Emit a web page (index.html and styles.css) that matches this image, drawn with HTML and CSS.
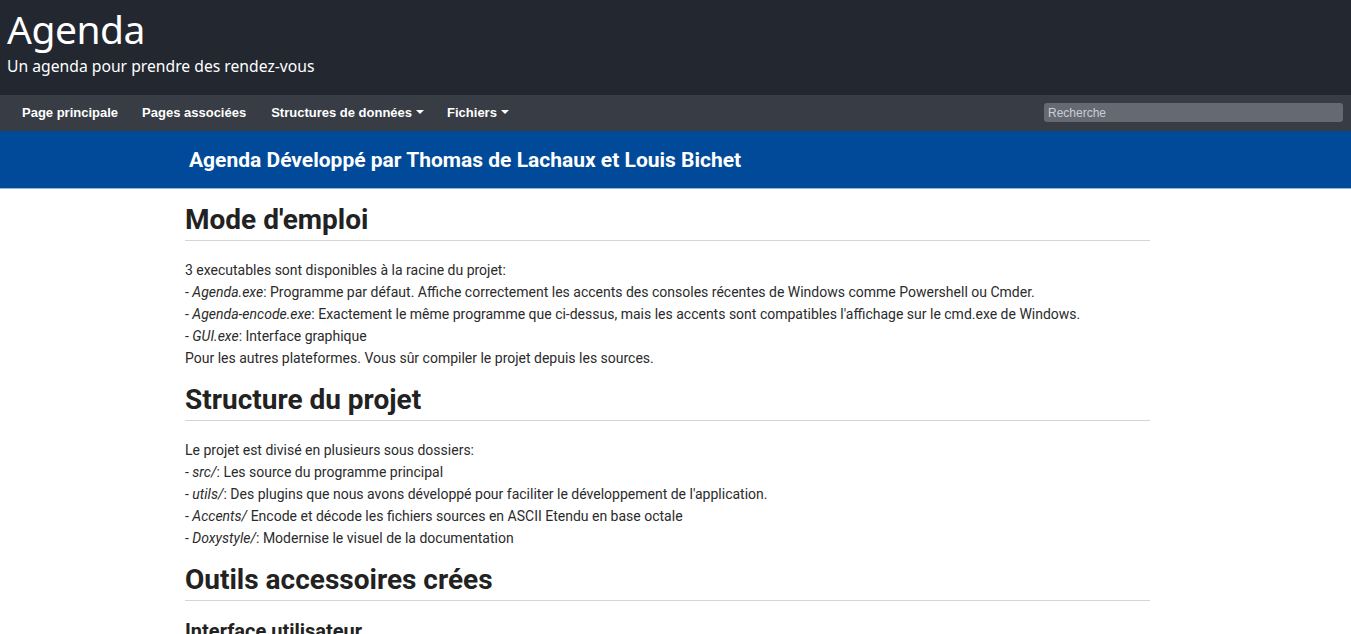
FILE: index.html
```html
<!DOCTYPE html>
<html lang="fr">
<head>
<meta charset="utf-8">
<title>Agenda</title>
<link rel="stylesheet" href="styles.css">
</head>
<body>
<header class="top">
  <div class="proj-name">Agenda</div>
  <div class="proj-brief">Un agenda pour prendre des rendez-vous</div>
</header>
<nav class="navbar">
  <ul class="menu">
    <li>Page principale</li>
    <li>Pages associées</li>
    <li class="dd">Structures de données <span class="caret"></span></li>
    <li class="dd">Fichiers <span class="caret"></span></li>
  </ul>
  <input class="search" type="text" placeholder="Recherche">
</nav>
<div class="band">
  <div class="band-title">Agenda Développé par Thomas de Lachaux et Louis Bichet</div>
</div>
<main class="contents">
  <h1>Mode d'emploi</h1>
  <p>3 executables sont disponibles à la racine du projet:<br>
  - <em>Agenda.exe</em>: Programme par défaut. Affiche correctement les accents des consoles récentes de Windows comme Powershell ou Cmder.<br>
  - <em>Agenda-encode.exe</em>: Exactement le même programme que ci-dessus, mais les accents sont compatibles l'affichage sur le cmd.exe de Windows.<br>
  - <em>GUI.exe</em>: Interface graphique<br>
  Pour les autres plateformes. Vous sûr compiler le projet depuis les sources.</p>
  <h1>Structure du projet</h1>
  <p>Le projet est divisé en plusieurs sous dossiers:<br>
  - <em>src/</em>: Les source du programme principal<br>
  - <em>utils/</em>: Des plugins que nous avons développé pour faciliter le développement de l'application.<br>
  - <em>Accents/</em> Encode et décode les fichiers sources en ASCII Etendu en base octale<br>
  - <em>Doxystyle/</em>: Modernise le visuel de la documentation</p>
  <h1>Outils accessoires crées</h1>
  <h2>Interface utilisateur</h2>
</main>
</body>
</html>
```
FILE: styles.css
```css
html, body {
  margin: 0;
  padding: 0;
  background: #ffffff;
  overflow: hidden;
}
body {
  font-family: Roboto, "Liberation Sans", sans-serif;
  color: #2b2b2b;
}
.top {
  background: #222730;
  height: 95px;
  box-sizing: border-box;
  padding: 6px 0 0 7px;
  color: #ffffff;
}
.proj-name {
  font-family: "Noto Sans", "Open Sans", sans-serif;
  font-size: 39px;
  line-height: 46px;
  letter-spacing: -0.5px;
}
.proj-brief {
  font-family: "Noto Sans", "Open Sans", sans-serif;
  font-size: 15.7px;
  line-height: 20px;
  margin-top: 4px;
}
.navbar {
  background: #383c45;
  height: 36px;
  display: flex;
  align-items: center;
  justify-content: space-between;
  padding: 0 8px 0 10px;
}
.menu {
  list-style: none;
  margin: -2px 0 0 0;
  padding: 0;
  display: flex;
}
.menu li {
  font-family: "Liberation Sans", Arial, sans-serif;
  font-weight: bold;
  font-size: 13px;
  color: #ffffff;
  padding: 0 12px;
  display: flex;
  align-items: center;
}
.menu li:nth-child(3) {
  padding-left: 13px;
}
.menu li:nth-child(4) {
  padding-left: 11px;
}
.caret {
  display: inline-block;
  width: 0;
  height: 0;
  border-left: 4px solid transparent;
  border-right: 4px solid transparent;
  border-top: 4px solid #ffffff;
  margin-left: 4px;
}
.search {
  width: 299px;
  height: 19px;
  box-sizing: border-box;
  border: none;
  border-radius: 3px;
  background: #656a72;
  color: #d0d4da;
  font-family: "Liberation Sans", Arial, sans-serif;
  font-size: 12px;
  padding: 1px 4px 0 4px;
  margin-top: -2px;
}
.search::placeholder {
  color: #c9ced6;
}
.band {
  background: #004a99;
  height: 57px;
  border-bottom: 1px solid #8fb4e0;
  display: flex;
  align-items: center;
}
.band-title {
  margin-left: 189px;
  font-family: Roboto, sans-serif;
  font-weight: bold;
  font-size: 21px;
  color: #ffffff;
  margin-top: 0;
}
.contents {
  width: 965px;
  margin-left: 185px;
  padding-top: 14px;
}
h1 {
  font-family: Roboto, sans-serif;
  font-weight: bold;
  font-size: 28px;
  line-height: 34px;
  color: #222222;
  margin: 0 0 18px 0;
  padding-bottom: 3px;
  border-bottom: 1px solid #d4d4d4;
}
h2 {
  font-family: Roboto, sans-serif;
  font-weight: bold;
  font-size: 20px;
  line-height: 24px;
  color: #222222;
  margin: 16px 0 0 0;
}
p {
  font-size: 14px;
  line-height: 22px;
  margin: 0 0 14px 0;
  color: #2b2b2b;
}
```
